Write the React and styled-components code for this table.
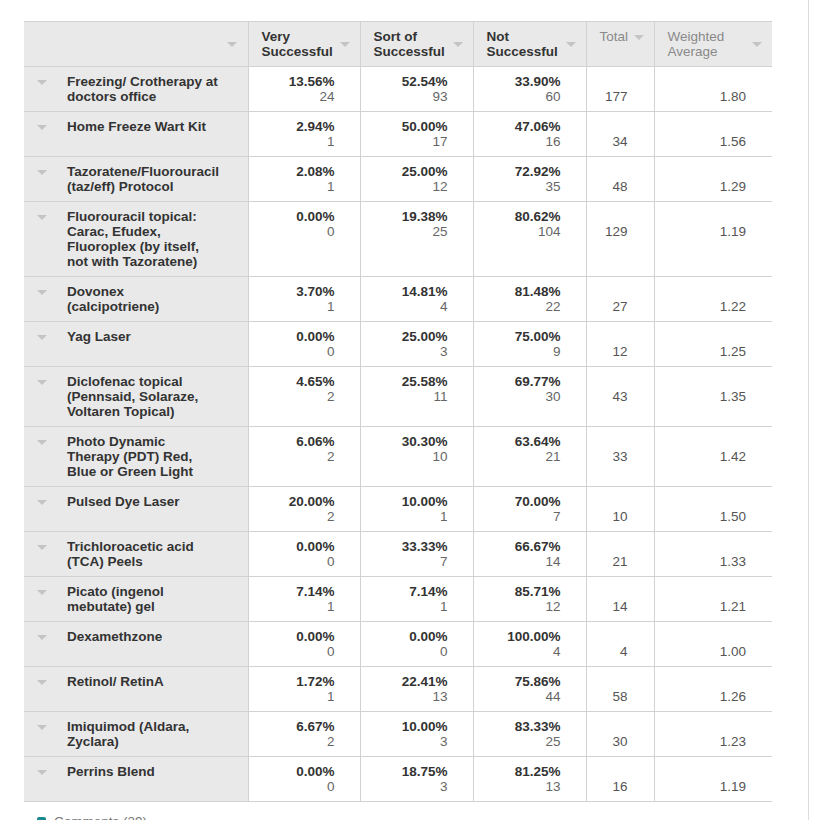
import React from "react";
import styled, { createGlobalStyle } from "styled-components";

const GlobalStyle = createGlobalStyle`
  html, body {
    margin: 0;
    padding: 0;
    background: #fff;
    font-family: "Liberation Sans", Arial, sans-serif;
  }
`;

const Page = styled.div`
  width: 809px;
  min-height: 820px;
  border-right: 1px solid #dcdcdc;
  padding: 21px 0 0 24px;
  box-sizing: border-box;
  overflow: hidden;
`;

const Table = styled.table`
  width: 748px;
  border-collapse: collapse;
  table-layout: fixed;
  font-size: 13.5px;
  line-height: 15px;
  color: #333;
`;

const Col = styled.col`
  width: ${({ $w }) => $w}px;
`;

const HeadCell = styled.th`
  background: #e9e9e9;
  border-top: 1px solid #d2d2d2;
  border-bottom: 1px solid #d2d2d2;
  border-left: ${({ $first }) => ($first ? "none" : "1px solid #d2d2d2")};
  padding: 7px ${({ $pr }) => $pr ?? 10}px 7px 13px;
  text-align: left;
  vertical-align: top;
  font-weight: ${({ $light }) => ($light ? "normal" : "bold")};
  color: ${({ $light }) => ($light ? "#8a8a8a" : "#333")};
  height: 30px;
`;

const HeadInner = styled.div`
  display: flex;
  justify-content: ${({ $inline }) => ($inline ? "flex-start" : "space-between")};
  align-items: ${({ $inline }) => ($inline ? "flex-start" : "center")};
  gap: 6px;
  height: 30px;
`;

const Caret = styled.span`
  display: inline-block;
  flex: none;
  width: 0;
  height: 0;
  border-left: 5px solid transparent;
  border-right: 5px solid transparent;
  border-top: 5px solid #c4c4c4;
  margin-top: ${({ $mt }) => $mt ?? 0}px;
`;

const Row = styled.tr`
  border-bottom: 1px solid #d2d2d2;
`;

const LabelCell = styled.td`
  background: #e9e9e9;
  padding: 7px 8px 7px 13px;
  vertical-align: top;
  font-weight: bold;
`;

const LabelInner = styled.div`
  display: flex;
  align-items: flex-start;
  gap: 20px;
`;

const Cell = styled.td`
  border-left: 1px solid #d2d2d2;
  padding: ${({ $pt }) => $pt ?? 7}px ${({ $pr }) => $pr ?? 25}px 7px 10px;
  text-align: right;
  vertical-align: top;
  color: #555;
`;

const Pct = styled.div`
  font-weight: bold;
  color: #333;
`;

const Count = styled.div`
  color: #666;
`;

const Footer = styled.div`
  display: flex;
  align-items: center;
  gap: 8px;
  margin: 12px 0 0 13px;
  font-size: 13.5px;
  color: #777;
`;

const FooterIcon = styled.span`
  width: 9px;
  height: 10px;
  background: #1a8a8a;
  border-radius: 2px;
`;

const rows = [
  [["Freezing/ Crotherapy at", "doctors office"], ["13.56%", 24], ["52.54%", 93], ["33.90%", 60], 177, "1.80"],
  [["Home Freeze Wart Kit"], ["2.94%", 1], ["50.00%", 17], ["47.06%", 16], 34, "1.56"],
  [["Tazoratene/Fluorouracil", "(taz/eff) Protocol"], ["2.08%", 1], ["25.00%", 12], ["72.92%", 35], 48, "1.29"],
  [["Fluorouracil topical:", "Carac, Efudex,", "Fluoroplex (by itself,", "not with Tazoratene)"], ["0.00%", 0], ["19.38%", 25], ["80.62%", 104], 129, "1.19"],
  [["Dovonex", "(calcipotriene)"], ["3.70%", 1], ["14.81%", 4], ["81.48%", 22], 27, "1.22"],
  [["Yag Laser"], ["0.00%", 0], ["25.00%", 3], ["75.00%", 9], 12, "1.25"],
  [["Diclofenac topical", "(Pennsaid, Solaraze,", "Voltaren Topical)"], ["4.65%", 2], ["25.58%", 11], ["69.77%", 30], 43, "1.35"],
  [["Photo Dynamic", "Therapy (PDT) Red,", "Blue or Green Light"], ["6.06%", 2], ["30.30%", 10], ["63.64%", 21], 33, "1.42"],
  [["Pulsed Dye Laser"], ["20.00%", 2], ["10.00%", 1], ["70.00%", 7], 10, "1.50"],
  [["Trichloroacetic acid", "(TCA) Peels"], ["0.00%", 0], ["33.33%", 7], ["66.67%", 14], 21, "1.33"],
  [["Picato (ingenol", "mebutate) gel"], ["7.14%", 1], ["7.14%", 1], ["85.71%", 12], 14, "1.21"],
  [["Dexamethzone"], ["0.00%", 0], ["0.00%", 0], ["100.00%", 4], 4, "1.00"],
  [["Retinol/ RetinA"], ["1.72%", 1], ["22.41%", 13], ["75.86%", 44], 58, "1.26"],
  [["Imiquimod (Aldara,", "Zyclara)"], ["6.67%", 2], ["10.00%", 3], ["83.33%", 25], 30, "1.23"],
  [["Perrins Blend"], ["0.00%", 0], ["18.75%", 3], ["81.25%", 13], 16, "1.19"],
];

const PctCell = ({ value }) => (
  <Cell>
    <Pct>{value[0]}</Pct>
    <Count>{value[1]}</Count>
  </Cell>
);

const App = () => {
  return (
    <>
      <GlobalStyle />
      <Page>
        <Table>
          <colgroup>
            <Col $w={224} />
            <Col $w={112} />
            <Col $w={113} />
            <Col $w={113} />
            <Col $w={68} />
            <Col $w={118} />
          </colgroup>
          <thead>
            <tr>
              <HeadCell $first $pr={11}>
                <HeadInner>
                  <span />
                  <Caret />
                </HeadInner>
              </HeadCell>
              <HeadCell>
                <HeadInner>
                  <span>Very<br />Successful</span>
                  <Caret />
                </HeadInner>
              </HeadCell>
              <HeadCell>
                <HeadInner>
                  <span>Sort of<br />Successful</span>
                  <Caret />
                </HeadInner>
              </HeadCell>
              <HeadCell>
                <HeadInner>
                  <span>Not<br />Successful</span>
                  <Caret />
                </HeadInner>
              </HeadCell>
              <HeadCell $light $pr={4}>
                <HeadInner $inline>
                  <span>Total</span>
                  <Caret $mt={6} />
                </HeadInner>
              </HeadCell>
              <HeadCell $light>
                <HeadInner>
                  <span>Weighted<br />Average</span>
                  <Caret />
                </HeadInner>
              </HeadCell>
            </tr>
          </thead>
          <tbody>
            {rows.map((r, i) => (
              <Row key={i}>
                <LabelCell>
                  <LabelInner>
                    <Caret $mt={6} />
                    <span>
                      {r[0].map((line, j) => (
                        <React.Fragment key={j}>
                          {j > 0 && <br />}
                          {line}
                        </React.Fragment>
                      ))}
                    </span>
                  </LabelInner>
                </LabelCell>
                <PctCell value={r[1]} />
                <PctCell value={r[2]} />
                <PctCell value={r[3]} />
                <Cell $pt={22} $pr={26}>{r[4]}</Cell>
                <Cell $pt={22} $pr={26}>{r[5]}</Cell>
              </Row>
            ))}
          </tbody>
        </Table>
        <Footer>
          <FooterIcon />
          <span>Comments (39)</span>
        </Footer>
      </Page>
    </>
  );
};

export default App;
